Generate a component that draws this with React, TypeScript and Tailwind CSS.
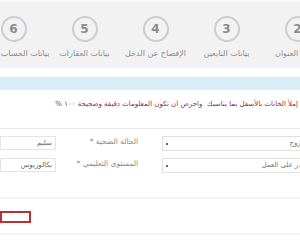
const steps = [
  { n: 2, label: "بيانات العنوان" },
  { n: 3, label: "بيانات التابعين" },
  { n: 4, label: "الإفصاح عن الدخل" },
  { n: 5, label: "بيانات العقارات" },
  { n: 6, label: "بيانات الحساب البنكي" },
];

const rows = [
  { select: "متزوج", label: "الحالة الصحية", value: "سليم" },
  { select: "قادر على العمل", label: "المستوى التعليمي", value: "بكالوريوس" },
];

export default function App() {
  return (
    <div
      dir="rtl"
      className="w-[300px] h-[250px] overflow-hidden bg-white font-['DejaVu_Sans',sans-serif]"
    >
      {/* --- steps --- */}
      <div className="h-[68px] bg-[#f2f2f2] border-t-2 border-[#f8f8f8]">
        <div className="flex -mr-[33px]">
          {steps.map((s) => (
            <div
              key={s.n}
              className="w-[71px] shrink-0 flex flex-col items-center pt-[14px]"
            >
              <div className="w-[26px] h-[26px] rounded-full border-2 border-[#cdcdcd] flex items-center justify-center text-[12px] font-bold text-[#8c8c8c]">
                {s.n}
              </div>
              <span className="mt-[6px] text-[8px] leading-[11px] text-[#8c8c8c] whitespace-nowrap">
                {s.label}
              </span>
            </div>
          ))}
        </div>
      </div>

      {/* --- info bar --- */}
      <div className="mt-[9px] h-[13px] bg-[#d9edf7]" />

      <div className="h-[38px] pt-[8px] pr-[2px]">
        <p className="text-[7px] leading-[12px] text-[#9e2a31] whitespace-nowrap">
          إملأ الخانات بالأسفل بما يناسبك&nbsp; واحرص ان تكون المعلومات دقيقة
          وصحيحة ١٠٠ %
        </p>
      </div>

      {/* --- form --- */}
      <div className="border-t border-[#e8e8e8] pt-[7px] h-[69px]">
        {rows.map((r) => (
          <div key={r.label} className="flex items-start -mr-[10px] mb-[7px]">
            <div className="w-[148px] h-[15px] shrink-0 border border-[#e0e0e0] flex items-center justify-between pr-[2px] pl-[3px]">
              <span className="text-[7px] text-[#777] whitespace-nowrap">
                {r.select}
              </span>
              <span className="w-[2px] h-[2px] bg-[#666]" />
            </div>
            <div className="w-[82px] shrink-0 mr-[24px] pt-[1px] text-[7.5px] leading-[10px] text-[#8a8a8a] whitespace-nowrap">
              {r.label} *
            </div>
            <div className="w-[56px] shrink-0 h-[14px] border border-[#e4e4e4] flex items-center pr-[3px]">
              <span className="text-[7px] text-[#666] whitespace-nowrap">
                {r.value}
              </span>
            </div>
          </div>
        ))}
      </div>

      {/* --- actions --- */}
      <div className="border-t-2 border-[#f2f2f2] h-[36px] flex items-center justify-end">
        <div className="w-[31px] h-[12px] border-2 border-[#b3333b] mt-[2px]" />
      </div>
      <div className="border-t-2 border-[#f2f2f2]" />
    </div>
  );
}
